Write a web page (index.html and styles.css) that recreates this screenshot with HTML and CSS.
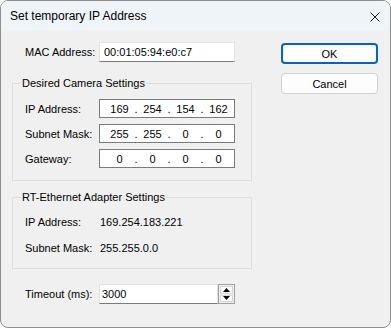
FILE: index.html
```html
<!DOCTYPE html>
<html>
<head>
  <title>Set temporary IP Address</title>
  <link rel="stylesheet" href="styles.css">
</head>
<body>
  <div class="dialog">
    <div class="titlebar">
      <span class="title">Set temporary IP Address</span>
      <svg class="close" width="10" height="10" viewBox="0 0 10 10">
        <path d="M0.5 0.5 L9.5 9.5 M9.5 0.5 L0.5 9.5" stroke="#1b1b1b" stroke-width="1" fill="none"/>
      </svg>
    </div>

    <div class="content">
      <div class="left">
        <div class="row mac-row">
          <label class="lbl">MAC Address:</label>
          <div class="edit">00:01:05:94:e0:c7</div>
        </div>

        <fieldset class="group group-cam">
          <legend>Desired Camera Settings</legend>
          <div class="row">
            <label class="lbl">IP Address:</label>
            <div class="ipbox">
              <span>169</span><i>.</i><span>254</span><i>.</i><span>154</span><i>.</i><span>162</span>
            </div>
          </div>
          <div class="row">
            <label class="lbl">Subnet Mask:</label>
            <div class="ipbox">
              <span>255</span><i>.</i><span>255</span><i>.</i><span>0</span><i>.</i><span>0</span>
            </div>
          </div>
          <div class="row">
            <label class="lbl">Gateway:</label>
            <div class="ipbox">
              <span>0</span><i>.</i><span>0</span><i>.</i><span>0</span><i>.</i><span>0</span>
            </div>
          </div>
        </fieldset>

        <fieldset class="group group-rt">
          <legend>RT-Ethernet Adapter Settings</legend>
          <div class="row info">
            <label class="lbl">IP Address:</label>
            <span class="val">169.254.183.221</span>
          </div>
          <div class="row info">
            <label class="lbl">Subnet Mask:</label>
            <span class="val">255.255.0.0</span>
          </div>
        </fieldset>

        <div class="row timeout-row">
          <label class="lbl">Timeout (ms):</label>
          <div class="spin">
            <div class="edit spin-edit">3000</div>
            <div class="spin-btns">
              <div class="spin-btn"><svg width="7" height="4" viewBox="0 0 7 4"><path d="M0 4 L3.5 0 L7 4 Z" fill="#000"/></svg></div>
              <div class="spin-btn"><svg width="7" height="4" viewBox="0 0 7 4"><path d="M0 0 L7 0 L3.5 4 Z" fill="#000"/></svg></div>
            </div>
          </div>
        </div>
      </div>

      <div class="right">
        <button class="btn btn-default">OK</button>
        <button class="btn">Cancel</button>
      </div>
    </div>
  </div>
</body>
</html>
```

FILE: styles.css
```css
html, body { margin: 0; padding: 0; background: #ffffff; }
body { font-family: "Liberation Sans", Arial, sans-serif; font-size: 11px; color: #000; }

.dialog { width: 391px; height: 328px; box-sizing: border-box; border: 1px solid #8e8e8e; border-radius: 8px; overflow: hidden; background: #f0f0f0; }

.titlebar { height: 30px; background: #eff4f9; display: flex; align-items: center; justify-content: space-between; padding: 0 10px 0 9px; }
.title { font-size: 12px; color: #000; }
.close { margin-top: 1px; }

.content { display: flex; padding: 0 0 0 11px; }
.left { width: 240px; }
.right { display: flex; flex-direction: column; gap: 9px; margin-left: 29px; padding-top: 12px; }

.row { display: flex; align-items: center; height: 19px; }
.lbl { width: 74px; flex: none; }
.mac-row { margin-top: 11px; height: 20px; padding-left: 13px; }

.edit { box-sizing: border-box; width: 136px; height: 20px; background: #fff; border: 1px solid #e2e2e2; border-bottom-color: #7a7a7a; padding: 0 4px; display: flex; align-items: center; }

.group { margin: 0; border: 1px solid #dcdcdc; padding: 0 0 0 12px; min-width: 0; }
.group legend { line-height: 14px; padding: 0 1px; margin-left: -4px; }
.group-cam { margin-top: 14px; padding-top: 9px; padding-bottom: 12px; }
.group-cam .row + .row { margin-top: 6px; }
.group-rt { margin-top: 9px; padding-top: 8px; padding-bottom: 10px; }
.group-rt .row { height: 20px; }
.group-rt .row + .row { margin-top: 6px; }
.val { padding-left: 1px; }

.ipbox { box-sizing: border-box; width: 136px; height: 19px; background: #fff; border: 1px solid #7a7a7a; display: flex; align-items: center; padding-left: 6px; }
.ipbox span { width: 27px; text-align: center; }
.ipbox i { font-style: normal; width: 6px; text-align: center; }

.timeout-row { margin-top: 15px; height: 20px; padding-left: 13px; }
.spin { display: flex; }
.spin-edit { width: 119px; padding-left: 2px; }
.spin-btns { box-sizing: border-box; width: 17px; height: 20px; border: 1px solid #a0a0a0; display: flex; flex-direction: column; gap: 1px; padding: 1px; background: #f0f0f0; }
.spin-btn { flex: 1; display: flex; align-items: center; justify-content: center; background: #fbfbfb; border: 1px solid #d6d6d6; }

.btn { box-sizing: border-box; width: 97px; height: 21px; font-family: "Liberation Sans", Arial, sans-serif; font-size: 11px; color: #000; background: #fdfdfd; border: 1px solid #d0d0d0; border-radius: 4px; padding: 0; }
.btn-default { border: 2px solid #0067c0; }
```
